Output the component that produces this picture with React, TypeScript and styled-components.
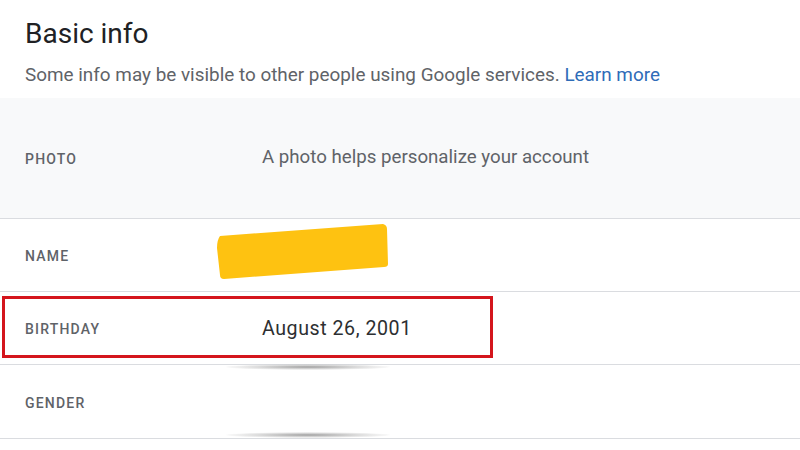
import React from "react";
import styled, { createGlobalStyle } from "styled-components";

const Global = createGlobalStyle`
  html, body { margin: 0; padding: 0; background: #ffffff; }
  body { font-family: Roboto, "Liberation Sans", Arial, sans-serif; }
  * { box-sizing: border-box; }
`;

const Page = styled.div`
  width: 800px;
  height: 450px;
  overflow: hidden;
  background: #ffffff;
  display: flex;
  flex-direction: column;
`;

const Header = styled.header`
  padding: 16px 25px 0 25px;
  height: 98px;
`;

const Title = styled.h1`
  margin: 0;
  font-family: Roboto, "Open Sans", sans-serif;
  font-weight: 400;
  font-size: 28px;
  line-height: 36px;
  color: #202124;
`;

const Subtitle = styled.p`
  margin: 11px 0 0 0;
  font-size: 18.9px;
  line-height: 24px;
  color: #5f6368;
`;

const Link = styled.a`
  color: #2f6cb8;
  text-decoration: none;
`;

const List = styled.div`
  display: flex;
  flex-direction: column;
  border-bottom: 1px solid #dadce0;
`;

const Row = styled.div<{ $tall?: boolean; $shaded?: boolean }>`
  position: relative;
  display: grid;
  grid-template-columns: 237px 1fr;
  align-items: center;
  height: ${(p) => (p.$tall ? "121px" : "73px")};
  padding-left: 25px;
  padding-top: 2px;
  background: ${(p) => (p.$shaded ? "#f8f9fa" : "#ffffff")};
  border-bottom: 1px solid #dadce0;
  &:last-child {
    border-bottom: none;
  }
`;

const Label = styled.div`
  font-size: 14px;
  font-weight: 500;
  letter-spacing: 1.2px;
  text-transform: uppercase;
  color: #5f6368;
`;

const Value = styled.div<{ $muted?: boolean }>`
  font-size: ${(p) => (p.$muted ? "18.7px" : "19.6px")};
  letter-spacing: ${(p) => (p.$muted ? "0" : "0.55px")};
  margin-top: ${(p) => (p.$muted ? "-4px" : "-2px")};
  color: ${(p) => (p.$muted ? "#5f6368" : "#2d2f31")};
`;

const Scribble = styled.svg`
  position: absolute;
  left: 212px;
  top: 3px;
  width: 180px;
  height: 60px;
`;

const Highlight = styled.div`
  position: absolute;
  left: 2px;
  top: 4px;
  width: 491px;
  height: 62px;
  border: 3px solid #d4151c;
  pointer-events: none;
`;

const Smear = styled.div<{ $top: number }>`
  position: absolute;
  z-index: 1;
  left: 226px;
  top: ${(p) => p.$top}px;
  width: 164px;
  height: 6px;
  border-radius: 50%;
  background: radial-gradient(ellipse at center, rgba(120,120,120,0.7) 0%, rgba(170,170,170,0.4) 45%, rgba(255,255,255,0) 75%);
  pointer-events: none;
`;

export default function App() {
  return (
    <Page>
      <Global />
      <Header>
        <Title>Basic info</Title>
        <Subtitle>
          Some info may be visible to other people using Google services.{" "}
          <Link href="#">Learn more</Link>
        </Subtitle>
      </Header>
      <List>
        <Row $tall $shaded>
          <Label>Photo</Label>
          <Value $muted>A photo helps personalize your account</Value>
        </Row>
        <Row>
          <Label>Name</Label>
          <Value />
          <Scribble viewBox="0 0 180 60">
            <path
              d="M8 14 L171 2 Q175 3 175 7 L176 42 Q176 45 172 45 L12 57 Q8 57 8 53 L5 26 Q5 18 8 14 Z"
              fill="#fec211"
            />
          </Scribble>
        </Row>
        <Row>
          <Label>Birthday</Label>
          <Value>August 26, 2001</Value>
          <Highlight />
          <Smear $top={72} />
        </Row>
        <Row>
          <Label>Gender</Label>
          <Value />
          <Smear $top={67} />
        </Row>
      </List>
    </Page>
  );
}
